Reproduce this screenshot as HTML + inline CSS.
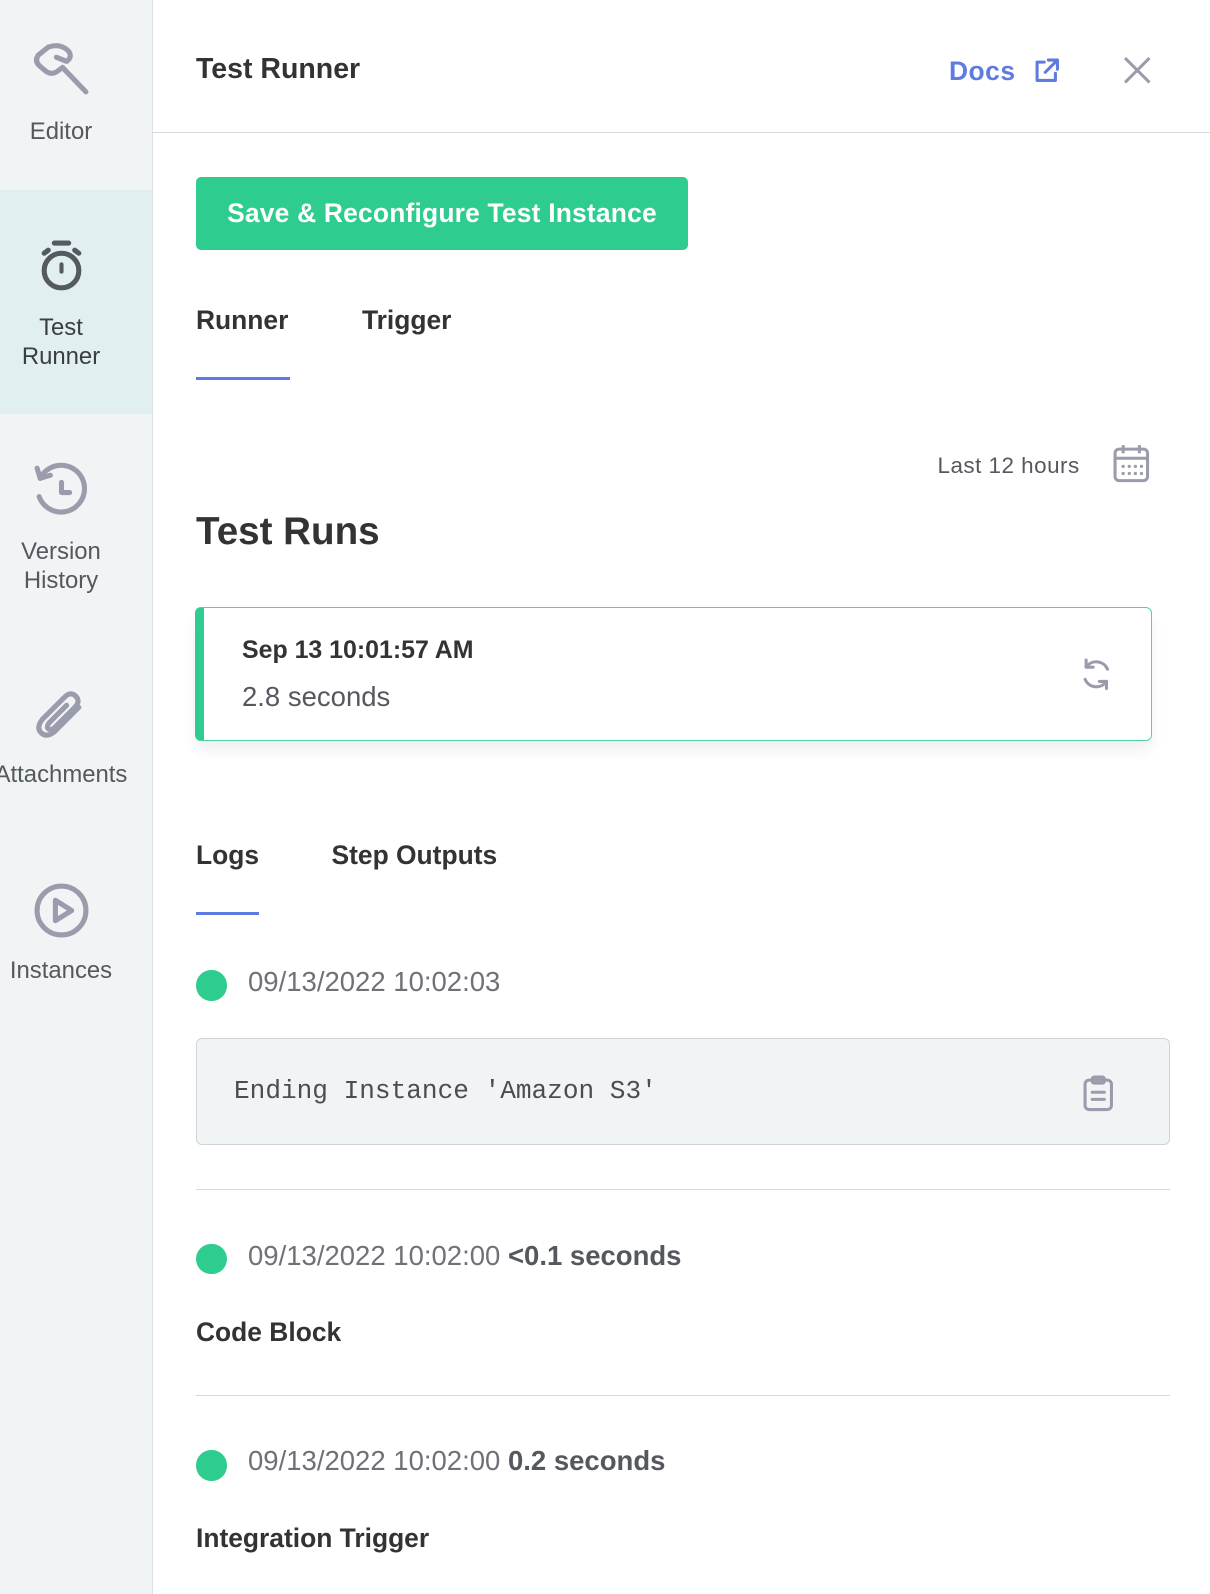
<!DOCTYPE html>
<html><head><meta charset="utf-8"><style>
*{margin:0;padding:0;box-sizing:border-box}
body{width:1210px;height:1594px;background:#fff;font-family:"Liberation Sans",sans-serif;color:#333;position:relative;overflow:hidden}
.a{position:absolute;white-space:nowrap}
.side{position:absolute;left:0;top:0;width:153px;height:1594px;background:#f0f4f5;border-right:1px solid #dde2e6}
.act{position:absolute;left:0;top:190px;width:152px;height:224px;background:#e2eff1}
.lbl{position:absolute;left:0;width:122px;text-align:center;font-size:23.9px;color:#55585e;line-height:28.5px}
.dot{position:absolute;left:196px;width:30.5px;height:30.5px;border-radius:50%;background:#2ecc8f}
.ts{position:absolute;left:248px;font-size:27.5px;color:#707078}
.ts b{color:#55585e}
.hr{position:absolute;left:196px;width:974px;height:1px;background:#d5d9dd}
.t{font-size:26.4px;font-weight:bold}
</style></head><body>
<div class="side"></div><div class="act"></div>
<svg class="a" style="left:30px;top:41px" width="61" height="61" viewBox="0 0 60 60" fill="none" stroke="#9a9cac" stroke-width="5" stroke-linecap="round" stroke-linejoin="round"><path d="M18 6 L8 14 Q4 20 10 25 L16 30 Q22 34 28 29 L32 26 L55 50"/><path d="M18 6 Q30 2 38 10 Q42 16 36 20 L26 16"/></svg>
<div class="lbl" style="top:118px">Editor</div>
<svg class="a" style="left:36.6px;top:239px" width="49" height="55" viewBox="0 0 48 54" fill="none" stroke="#555960" stroke-width="5" stroke-linecap="round"><path d="M17 4h14"/><circle cx="24" cy="31" r="17"/><path d="M7 14l4-3M41 14l-4-3"/><path d="M24 25v7" stroke-width="4"/></svg>
<div class="lbl" style="top:314px;color:#3a3d42">Test<br>Runner</div>
<svg class="a" style="left:30.5px;top:460px" width="61" height="61" viewBox="0 0 60 60" fill="none" stroke="#9a9cac" stroke-width="5" stroke-linecap="round" stroke-linejoin="round"><path d="M9 18 A23 23 0 1 1 8 36"/><path d="M6 8 L9 18 L19 15"/><path d="M30 22v10h8"/></svg>
<div class="lbl" style="top:538px">Version<br>History</div>
<svg class="a" style="left:33.5px;top:687px" width="55" height="55" viewBox="0 0 54 54" fill="none" stroke="#9a9cac" stroke-width="5" stroke-linecap="round"><path d="M44 20 L20 44 Q12 50 7 45 Q2 40 8 32 L30 10 Q36 4 41 9 Q46 14 40 20 L20 40 Q16 43 14 41 Q12 39 15 35 L32 18"/></svg>
<div class="lbl" style="top:761px;left:-6px;width:134px">Attachments</div>
<svg class="a" style="left:32.5px;top:882px" width="57" height="57" viewBox="0 0 56 56" fill="none" stroke="#9a9cac" stroke-width="5" stroke-linejoin="round"><circle cx="28" cy="28" r="24"/><path d="M22 18 L38 28 L22 38 Z"/></svg>
<div class="lbl" style="top:957px">Instances</div>

<div class="a" style="left:196px;top:53px;font-size:28.5px;font-weight:bold;color:#333">Test Runner</div>
<div class="a" style="left:949px;top:56px;font-size:26.4px;font-weight:bold;color:#5f7ae0;letter-spacing:0.5px">Docs</div>
<svg class="a" style="left:1032px;top:57px" width="28.5" height="28.5" viewBox="0 0 28 28" fill="none" stroke="#5f7ae0" stroke-width="3" stroke-linecap="round" stroke-linejoin="round"><path d="M12 5H5v18h18v-7M16 3h9v9M25 3L13 15"/></svg>
<svg class="a" style="left:1123px;top:56px" width="28.5" height="28.5" viewBox="0 0 28 28" stroke="#9a9cac" stroke-width="3"><path d="M2 2L26 26M26 2L2 26"/></svg>
<div class="a" style="left:152px;top:132px;width:1058px;height:1px;background:#d5dae0"></div>

<div class="a" style="left:196px;top:177px;width:492px;height:73px;background:#2ecc8f;border-radius:5px;color:#fff;font-size:26.4px;font-weight:bold;line-height:73px;text-align:center;letter-spacing:0.2px">Save &amp; Reconfigure Test Instance</div>

<div class="a t" style="left:196px;top:305px">Runner</div>
<div class="a t" style="left:362px;top:305px">Trigger</div>
<div class="a" style="left:196px;top:377px;width:93.5px;height:3px;background:#5f7ae0"></div>

<div class="a" style="left:937.5px;top:452.5px;font-size:22.4px;color:#55585e;letter-spacing:0.5px">Last 12 hours</div>
<svg class="a" style="left:1112px;top:443px" width="38.6" height="40.7" viewBox="0 0 38 40" fill="none" stroke="#9a9cac" stroke-width="3"><rect x="3" y="6" width="32" height="31" rx="4"/><path d="M3 15h32M11 2v8M27 2v8"/><g fill="#9a9cac" stroke="none"><circle cx="11" cy="23" r="1.6"/><circle cx="17" cy="23" r="1.6"/><circle cx="23" cy="23" r="1.6"/><circle cx="29" cy="23" r="1.6"/><circle cx="11" cy="30" r="1.6"/><circle cx="17" cy="30" r="1.6"/><circle cx="23" cy="30" r="1.6"/><circle cx="29" cy="30" r="1.6"/></g></svg>

<div class="a" style="left:196px;top:510px;font-size:38.6px;font-weight:bold;color:#333">Test Runs</div>

<div class="a" style="left:195px;top:607px;width:957px;height:134px;border:1px solid #4fd3a2;border-left:9px solid #2ecc8f;border-radius:6px;background:#fff;box-shadow:0 10px 14px rgba(0,0,0,0.06)"></div>
<div class="a" style="left:242px;top:635.5px;font-size:24.9px;font-weight:bold;color:#333">Sep 13 10:01:57 AM</div>
<div class="a" style="left:242px;top:681px;font-size:27.5px;color:#55585e">2.8 seconds</div>
<svg class="a" style="left:1079px;top:657px" width="34.6" height="34.6" viewBox="0 0 34 34" fill="none" stroke="#9a9cac" stroke-width="3" stroke-linecap="round" stroke-linejoin="round"><path d="M28 12A12 12 0 0 0 7 10M6 22a12 12 0 0 0 21 2"/><path d="M7 3v7h7M27 31v-7h-7"/></svg>

<div class="a t" style="left:196px;top:840px">Logs</div>
<div class="a t" style="left:331.5px;top:840px">Step Outputs</div>
<div class="a" style="left:196px;top:912px;width:63px;height:3px;background:#5f7ae0"></div>

<div class="dot" style="top:970px"></div>
<div class="ts" style="top:966px">09/13/2022 10:02:03</div>
<div class="a" style="left:196px;top:1038px;width:974px;height:107px;background:#f0f4f5;border:1px solid #cfd4d9;border-radius:6px"></div>
<div class="a" style="left:234px;top:1076px;font-family:'Liberation Mono',monospace;font-size:26.1px;color:#4a4d52">Ending Instance 'Amazon S3'</div>
<svg class="a" style="left:1082px;top:1075px" width="32.5" height="36.6" viewBox="0 0 32 36" fill="none" stroke="#9a9cac" stroke-width="3" stroke-linecap="round"><rect x="3" y="5" width="26" height="29" rx="4"/><rect x="10" y="2" width="12" height="6" rx="2"/><path d="M10 17h12M10 24h12"/></svg>

<div class="hr" style="top:1189px"></div>
<div class="dot" style="top:1243.5px"></div>
<div class="ts" style="top:1239.5px">09/13/2022 10:02:00 <b>&lt;0.1 seconds</b></div>
<div class="a t" style="left:196px;top:1317px">Code Block</div>
<div class="hr" style="top:1395px"></div>
<div class="dot" style="top:1450px"></div>
<div class="ts" style="top:1445px">09/13/2022 10:02:00 <b>0.2 seconds</b></div>
<div class="a t" style="left:196px;top:1523px">Integration Trigger</div>
</body></html>
